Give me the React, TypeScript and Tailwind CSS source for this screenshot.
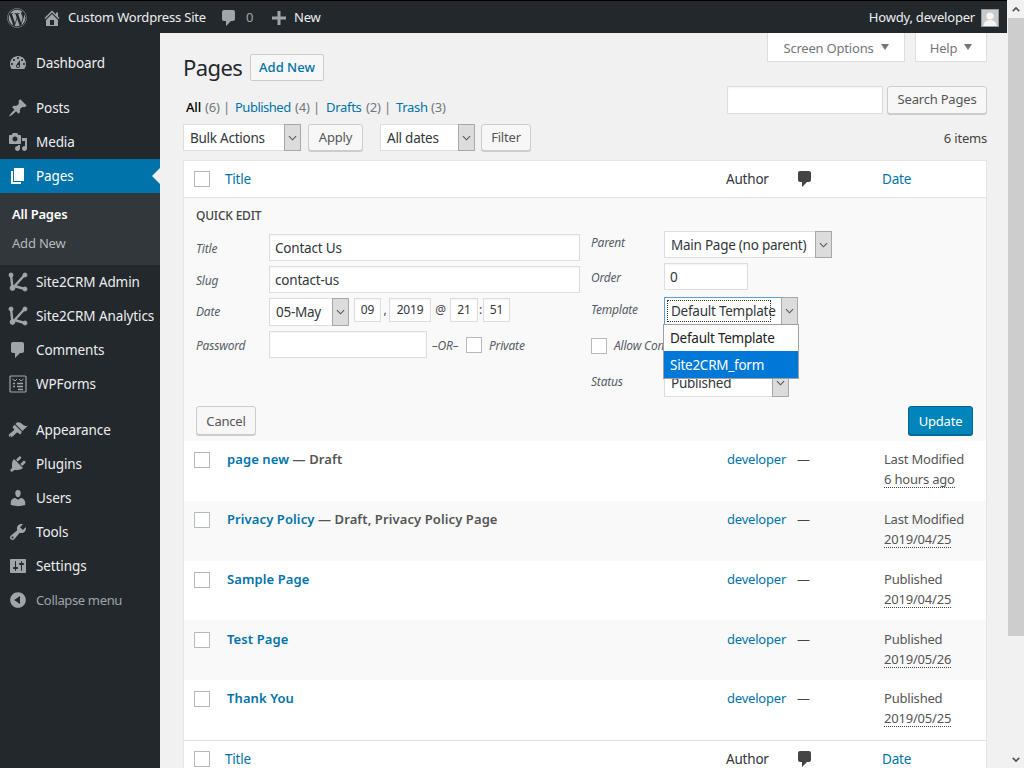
import React from "react";
import { FaWordpress } from "react-icons/fa";

const D = {
  dashboard: "M3.76 16h12.48c1.1-1.37 1.76-3.11 1.76-5 0-4.42-3.58-8-8-8s-8 3.58-8 8c0 1.89.66 3.63 1.76 5zM10 4c.55 0 1 .45 1 1s-.45 1-1 1-1-.45-1-1 .45-1 1-1zM6 6c.55 0 1 .45 1 1s-.45 1-1 1-1-.45-1-1 .45-1 1-1zm8 0c.55 0 1 .45 1 1s-.45 1-1 1-1-.45-1-1 .45-1 1-1zm-5.37 5.55L12 7v6c0 1.1-.9 2-2 2s-2-.9-2-2c0-.57.24-1.08.63-1.45zM4 10c.55 0 1 .45 1 1s-.45 1-1 1-1-.45-1-1 .45-1 1-1zm12 0c.55 0 1 .45 1 1s-.45 1-1 1-1-.45-1-1 .45-1 1-1zm-5 3c0-.55-.45-1-1-1s-1 .45-1 1 .45 1 1 1 1-.45 1-1z",
  post: "M10.44 3.02l1.82-1.82 6.36 6.35-1.83 1.82c-1.05-.68-2.48-.57-3.41.36l-.75.75c-.92.93-1.04 2.35-.35 3.41l-1.83 1.82-2.41-2.41-2.8 2.79c-.42.42-3.38 2.71-3.8 2.29s1.86-3.39 2.28-3.81l2.79-2.79L4.1 9.36l1.83-1.82c1.05.69 2.48.57 3.4-.36l.75-.75c.93-.92 1.05-2.35.36-3.41z",
  media: "M13 11V4c0-.55-.45-1-1-1h-1.67L9 1H5L3.67 3H2c-.55 0-1 .45-1 1v7c0 .55.45 1 1 1h10c.55 0 1-.45 1-1zM7 4.5c1.38 0 2.5 1.12 2.5 2.5S8.38 9.5 7 9.5 4.5 8.38 4.5 7 5.62 4.5 7 4.5zM14 6h5v10.5c0 1.38-1.12 2.5-2.5 2.5S14 17.88 14 16.5s1.12-2.5 2.5-2.5c.17 0 .34.02.5.05V9h-3V6zm-4 8.05V13h2v3.5c0 1.38-1.12 2.5-2.5 2.5S7 17.88 7 16.5 8.12 14 9.5 14c.17 0 .34.02.5.05z",
  page: "M6 15V2h10v13H6zm-1 1h8v2H3V5h2v11z",
  comment: "M5 2h9c1.1 0 2 .9 2 2v7c0 1.1-.9 2-2 2h-2l-5 5v-5H5c-1.1 0-2-.9-2-2V4c0-1.1.9-2 2-2z",
  appearance: "M14.48 11.06L7.41 3.99l1.5-1.5c.5-.56 2.3-.47 3.51.32 1.21.8 1.43 1.28 2.91 2.1 1.18.64 2.45 1.26 4.45.85zm-.71.71L6.7 4.7 4.93 6.47c-.39.39-.39 1.02 0 1.41l1.06 1.06c.39.39.39 1.03 0 1.42-.6.6-1.43 1.11-2.21 1.69-.35.26-.7.53-1.01.84C1.43 13.23.4 15 1 16.5c.2.5 1.5-.6 2.2-1 .2.5-.9 1.6-.5 2 .3.3 1.6-1 2.4-1.4.9-.5 1.7-1.6 2.4-2.3.6-.6 1.2-1.3 1.9-1.3.4 0 .7.2 1 .5l1.06 1.06c.39.39 1.02.39 1.41 0z",
  plugin: "M13.11 4.36L9.87 7.6 8 5.73l3.24-3.24c.35-.34 1.05-.2 1.56.32.52.51.66 1.21.31 1.55zm-8 1.77l.91-1.12 9.01 9.01-1.19.84c-.71.71-2.63 1.16-3.82 1.16H6.14L4.9 17.26c-.59.59-1.54.59-2.12 0-.59-.58-.59-1.53 0-2.12l1.24-1.24v-3.88c0-1.13.4-3.19 1.09-3.89zm7.26 3.97l3.24-3.24c.34-.35 1.04-.21 1.55.31.52.51.66 1.21.31 1.55l-3.24 3.25z",
  users: "M10 9.25c-2.27 0-2.73-3.44-2.73-3.44C7 4.02 7.82 2 9.97 2c2.16 0 2.98 2.02 2.71 3.81 0 0-.41 3.44-2.68 3.44zm0 2.57L12.72 10c2.39 0 4.52 2.33 4.52 4.53v2.49s-3.65 1.13-7.24 1.13c-3.65 0-7.24-1.13-7.24-1.13v-2.49c0-2.25 1.94-4.48 4.47-4.48z",
  tools: "M16.68 9.77c-1.34 1.34-3.3 1.67-4.95.99l-5.41 6.52c-.99.99-2.59.99-3.58 0s-.99-2.59 0-3.57l6.52-5.42c-.68-1.65-.35-3.61.99-4.95 1.28-1.28 3.12-1.62 4.72-1.06l-2.89 2.89 2.82 2.82 2.86-2.87c.53 1.58.18 3.39-1.08 4.65zM3.81 16.21c.4.39 1.04.39 1.43 0 .4-.4.4-1.04 0-1.43-.39-.4-1.03-.4-1.43 0-.39.39-.39 1.03 0 1.43z",
  settings: "M18 16V4c0-.55-.45-1-1-1H3c-.55 0-1 .45-1 1v12c0 .55.45 1 1 1h14c.55 0 1-.45 1-1zM8 11h1c.55 0 1 .45 1 1s-.45 1-1 1H8v1.5c0 .28-.22.5-.5.5s-.5-.22-.5-.5V13H6c-.55 0-1-.45-1-1s.45-1 1-1h1V5.5c0-.28.22-.5.5-.5s.5.22.5.5V11zm5-2h-1c-.55 0-1-.45-1-1s.45-1 1-1h1V5.5c0-.28.22-.5.5-.5s.5.22.5.5V7h1c.55 0 1 .45 1 1s-.45 1-1 1h-1v5.5c0 .28-.22.5-.5.5s-.5-.22-.5-.5V9z",
  collapse: "M10 2.16c4.33 0 7.84 3.51 7.84 7.84s-3.51 7.84-7.84 7.84S2.16 14.33 2.16 10 5.71 2.16 10 2.16zm2 11.72V6.12L6.18 9.97z",
  home: "M16 8.5l1.53 1.53-1.06 1.06L10 4.62l-6.47 6.47-1.06-1.06L10 2.5l4 4v-2h2v4zm-6-2.46l6 5.99V18H4v-5.97zM12 17v-5H8v5h4z",
  plus: "M17 8.500v3h-5.500v5.500h-3v-5.500H3v-3h5.500V3h3v5.500z",
};

function Dash({ d, className }: { d: string; className?: string }) {
  return (
    <svg viewBox="0 0 20 20" className={className} fill="currentColor">
      <path d={d} />
    </svg>
  );
}

function CrmIcon() {
  return (
    <svg viewBox="0 0 20 20" className="w-5 h-5" fill="currentColor" stroke="currentColor">
      <path d="M3 2.5 L4.5 16.5 M4.5 16.5 L17 2.5 M6 14 L17 17" strokeWidth="2.4" fill="none" />
      <circle cx="3" cy="3" r="2" />
      <circle cx="4.500" cy="16" r="2.400" />
      <circle cx="17" cy="3" r="2" />
      <circle cx="17" cy="17" r="2" />
    </svg>
  );
}

function FormsIcon() {
  return (
    <svg viewBox="0 0 20 20" className="w-5 h-5" fill="none" stroke="currentColor">
      <rect x="2" y="2" width="16" height="16" rx="1" strokeWidth="1.2" />
      <path d="M4.5 5 L7 7 L9 5 M11 5 L13 7 L15.5 5" strokeWidth="1" />
      <path d="M5 9.5h2M9 9.5h6M5 12.5h2M9 12.5h6M10 15.5h5" strokeWidth="1.6" />
    </svg>
  );
}

function MenuItem({ icon, label, active, dim }: { icon: React.ReactNode; label: string; active?: boolean; dim?: boolean }) {
  return (
    <div className={`relative flex items-center h-[34px] ${active ? "bg-[#0073aa] text-white" : dim ? "text-[#a0a5aa]" : "text-[#eeeeee]"}`}>
      <div className={`w-[36px] flex justify-center ${active ? "text-white" : "text-[#a0a5aa]"}`}>{icon}</div>
      <span className={`whitespace-nowrap ${dim ? "text-[13px] tracking-[-0.35px] pt-[2px]" : "text-[13.5px] tracking-[-0.1px]"}`}>{label}</span>
      {active && <div className="absolute right-0 top-[9px] border-y-[8px] border-r-[8px] border-y-transparent border-r-[#f1f1f1]" />}
    </div>
  );
}

function Chevron() {
  return (
    <svg viewBox="0 0 10 6" className="w-[9px] h-[6px]" fill="none" stroke="#555" strokeWidth="1.2">
      <path d="M1 1 L5 5 L9 1" />
    </svg>
  );
}

function Select({ label, width, h = "h-[27px]", focus }: { label: string; width: string; h?: string; focus?: boolean }) {
  return (
    <div className={`flex shrink-0 bg-white border ${focus ? "border-[#5b9dd9]" : "border-[#dddddd]"} ${width} ${h}`}>
      <div className={`flex-1 min-w-0 flex items-center px-[6px] text-[#32373c] whitespace-nowrap overflow-hidden text-[13.5px] tracking-[-0.25px] ${focus ? "" : "pt-[1px]"}`}>
        {focus ? <span className="border border-dotted border-[#333] -ml-[4px] pl-[3px] pr-[1px] leading-[20px] w-full">{label}</span> : label}
      </div>
      <div className="w-[17px] shrink-0 bg-[#dcdcdc] border border-[#a8a8a8] flex items-center justify-center -my-[1px] -mr-[1px]">
        <Chevron />
      </div>
    </div>
  );
}

function Btn({ children, className = "" }: { children: React.ReactNode; className?: string }) {
  return (
    <div className={`flex items-center justify-center shrink-0 bg-[#f7f7f7] border border-[#cccccc] rounded-[3px] shadow-[0_1px_0_#cccccc] text-[#555555] text-[13px] ${className}`}>
      {children}
    </div>
  );
}

function Box({ value, className = "" }: { value?: string; className?: string }) {
  return (
    <div className={`flex items-center shrink-0 bg-white border border-[#dddddd] shadow-[inset_0_1px_2px_rgba(0,0,0,0.05)] text-[#32373c] whitespace-nowrap ${className}`}>
      {value}
    </div>
  );
}

function Check({ className = "" }: { className?: string }) {
  return <div className={`w-4 h-4 shrink-0 bg-white border border-[#b4b9be] ${className}`} />;
}

function Label({ children, className = "" }: { children: React.ReactNode; className?: string }) {
  return <span className={`italic text-[12px] text-[#555d66] pt-[2px] ${className}`}>{children}</span>;
}

function Head({ top }: { top?: boolean }) {
  return (
    <div className={`flex items-center h-[36px] text-[13.5px] ${top ? "border-b" : "border-t"} border-[#e1e1e1] box-content`}>
      <div className="w-[41px] pl-[10px]"><Check /></div>
      <div className="w-[501px] text-[#0073aa]">Title</div>
      <div className="w-[72px] text-[#32373c]">Author</div>
      <div className="w-[84px] text-[#444444]"><Dash d={D.comment} className="w-5 h-5 -ml-[3px]" /></div>
      <div className="text-[#0073aa]">Date</div>
    </div>
  );
}

const filters = [
  { name: "All", count: "(6)", nameW: "w-[19px]", gap: "ml-[3px]", cls: "text-black font-medium" },
  { name: "Published", count: "(4)", nameW: "w-[60px]", gap: "ml-[4px]", cls: "text-[#0073aa] tracking-[-0.5px]" },
  { name: "Drafts", count: "(2)", nameW: "w-[40px]", gap: "ml-[5px]", cls: "text-[#0073aa] tracking-[-0.3px]" },
  { name: "Trash", count: "(3)", nameW: "w-[35px]", gap: "ml-[4px]", cls: "text-[#0073aa] tracking-[-0.3px]" },
];

const rows = [
  { title: "page new", state: " — Draft", d1: "Last Modified", d2: "6 hours ago", h: "h-[60px]", pt: "pt-[8px]", bg: "bg-white" },
  { title: "Privacy Policy", state: " — Draft, Privacy Policy Page", d1: "Last Modified", d2: "2019/04/25", h: "h-[60px]", pt: "pt-[8px]", bg: "bg-[#f9f9f9]" },
  { title: "Sample Page", state: "", d1: "Published", d2: "2019/04/25", h: "h-[59px]", pt: "pt-[8px]", bg: "bg-white" },
  { title: "Test Page", state: "", d1: "Published", d2: "2019/05/26", h: "h-[60px]", pt: "pt-[9px]", bg: "bg-[#f9f9f9]" },
  { title: "Thank You", state: "", d1: "Published", d2: "2019/05/25", h: "h-[60px]", pt: "pt-[8px]", bg: "bg-white" },
];

export default function App() {
  return (
    <div className="flex h-[768px] w-[1024px] overflow-hidden bg-[#f1f1f1] text-[13px] tracking-[-0.2px] text-[#444444] font-['Noto_Sans','Open_Sans',sans-serif]">
      <div className="flex flex-col w-[1007px] shrink-0">
        {/* Admin bar */}
        <div className="flex items-center h-[33px] shrink-0 bg-[#23282d] border-t border-black text-[#eeeeee] text-[13px] pt-[2px]">
          <FaWordpress className="w-[20px] h-[20px] ml-[7px] text-[#a0a5aa]" />
          <Dash d={D.home} className="w-5 h-5 ml-[15px] text-[#a0a5aa]" />
          <span className="ml-[6px] w-[137px] whitespace-nowrap">Custom Wordpress Site</span>
          <Dash d={D.comment} className="w-5 h-5 ml-[14px] text-[#a0a5aa]" />
          <span className="ml-[7px] w-[8px] text-[#a0a5aa]">0</span>
          <Dash d={D.plus} className="w-5 h-5 ml-[15px] text-[#a0a5aa]" />
          <span className="ml-[5px]">New</span>
          <span className="ml-auto">Howdy, developer</span>
          <div className="relative w-[18px] h-[18px] ml-[6px] mr-[8px] bg-[#c9c9c9] border border-[#999] overflow-hidden">
            <svg viewBox="0 0 16 16" className="w-full h-full" fill="#f5f5f5">
              <circle cx="8" cy="6" r="3.600" />
              <path d="M1.5 16c0-4 3-6 6.500-6s6.500 2 6.500 6z" />
            </svg>
          </div>
        </div>
        <div className="flex flex-1 min-h-0">
          {/* Sidebar */}
          <div className="w-[160px] shrink-0 bg-[#23282d] pt-[13px]">
            <MenuItem icon={<Dash d={D.dashboard} className="w-5 h-5" />} label="Dashboard" />
            <div className="h-[11px]" />
            <MenuItem icon={<Dash d={D.post} className="w-5 h-5" />} label="Posts" />
            <MenuItem icon={<Dash d={D.media} className="w-5 h-5" />} label="Media" />
            <MenuItem active icon={<Dash d={D.page} className="w-5 h-5" />} label="Pages" />
            <div className="bg-[#32373c] h-[72px] pl-3 pt-[7px] text-[13px]">
              <div className="h-[29px] flex items-center font-semibold text-white">All Pages</div>
              <div className="h-[29px] flex items-center text-[#b4b9be]">Add New</div>
            </div>
            <MenuItem icon={<CrmIcon />} label="Site2CRM Admin" />
            <MenuItem icon={<CrmIcon />} label="Site2CRM Analytics" />
            <MenuItem icon={<Dash d={D.comment} className="w-5 h-5" />} label="Comments" />
            <MenuItem icon={<FormsIcon />} label="WPForms" />
            <div className="h-[12px]" />
            <MenuItem icon={<Dash d={D.appearance} className="w-5 h-5" />} label="Appearance" />
            <MenuItem icon={<Dash d={D.plugin} className="w-5 h-5" />} label="Plugins" />
            <MenuItem icon={<Dash d={D.users} className="w-5 h-5" />} label="Users" />
            <MenuItem icon={<Dash d={D.tools} className="w-5 h-5" />} label="Tools" />
            <MenuItem icon={<Dash d={D.settings} className="w-5 h-5" />} label="Settings" />
            <MenuItem dim icon={<Dash d={D.collapse} className="w-5 h-5" />} label="Collapse menu" />
          </div>
          {/* Main */}
          <div className="flex-1 min-w-0 pl-[23px] pr-[20px]">
            <div className="flex justify-end gap-[10px] h-[21px]">
              <div className="flex items-center justify-center gap-[7px] w-[138px] h-[29px] pt-[3px] bg-white border border-t-0 border-[#dddddd] text-[#72777c]">
                Screen Options <span className="border-x-[4.5px] border-t-[6px] border-x-transparent border-t-[#72777c] -mt-[3px]" />
              </div>
              <div className="flex items-center justify-center gap-[7px] w-[72px] h-[29px] pt-[3px] bg-white border border-t-0 border-[#dddddd] text-[#72777c]">
                Help <span className="border-x-[4.5px] border-t-[6px] border-x-transparent border-t-[#72777c] -mt-[3px]" />
              </div>
            </div>
            <div className="flex items-center h-[27px]">
              <span className="w-[58px] whitespace-nowrap text-[22px] tracking-[-0.6px] leading-none text-[#23282d] -mt-[2px]">Pages</span>
              <div className="flex items-center justify-center w-[74px] h-[27px] pt-[1px] ml-[9px] bg-[#f7f7f7] border border-[#cccccc] rounded-[2px] text-[#0073aa] font-medium tracking-normal">Add New</div>
            </div>
            <div className="flex justify-between h-[28px] mt-[5px]">
              <div className="flex pl-[3px] pt-[11px] text-[13px] leading-[20px] text-[#72777c] whitespace-nowrap">
                {filters.map((f, i) => (
                  <React.Fragment key={f.name}>
                    <span className={`${i === 0 ? "" : f.gap} ${f.nameW} ${f.cls}`}>{f.name}</span>
                    <span className="w-[17px]">{f.count}</span>
                    {i < 3 && <span className="w-[9px] text-center">|</span>}
                  </React.Fragment>
                ))}
              </div>
              <div className="flex gap-[4px]">
                <Box className="w-[156px] h-[28px]" />
                <Btn className="w-[100px] h-[28px]">Search Pages</Btn>
              </div>
            </div>
            <div className="flex items-start h-[28px] mt-[10px]">
              <Select label="Bulk Actions" width="w-[118px]" />
              <Btn className="w-[55px] h-[27px] ml-[7px]">Apply</Btn>
              <Select label="All dates" width="w-[95px]" h="h-[27px] ml-[17px]" />
              <Btn className="w-[50px] h-[27px] ml-[6px]">Filter</Btn>
              <span className="ml-auto pt-[5px]">6 items</span>
            </div>
            {/* Table */}
            <div className="mt-[8px] bg-white border border-[#e5e5e5]">
              <Head top />
              <div className="flex flex-col h-[243px] bg-[#f9f9f9] pl-[12px] pr-[13px] pb-[6px]">
                <div className="flex">
                  <div className="w-[384px] shrink-0">
                    <div className="h-[36px] flex items-center text-[12px] font-medium text-[#444] uppercase">Quick Edit</div>
                    <div className="flex items-center h-[27px]">
                      <Label className="w-[73px]">Title</Label>
                      <Box value="Contact Us" className="w-[311px] h-[27px] px-[5px] pt-[1px] text-[13.5px]" />
                    </div>
                    <div className="flex items-center h-[27px] mt-[5px]">
                      <Label className="w-[73px]">Slug</Label>
                      <Box value="contact-us" className="w-[311px] h-[27px] px-[5px] pt-[1px] text-[13.5px]" />
                    </div>
                    <div className="flex items-start h-[28px] mt-[5px]">
                      <Label className="w-[73px] pt-[5px]">Date</Label>
                      <Select label="05-May" width="w-[80px]" h="h-[28px]" />
                      <Box value="09" className="w-[27px] h-[24px] ml-[5px] justify-center text-[12px]" />
                      <span className="w-[8px] text-center text-[12px] pt-[3px]">,</span>
                      <Box value="2019" className="w-[42px] h-[24px] justify-center text-[12px]" />
                      <span className="w-[19px] text-center text-[12px] pt-[3px]">@</span>
                      <Box value="21" className="w-[28px] h-[24px] justify-center text-[12px]" />
                      <span className="w-[5px] text-center text-[12px] pt-[3px]">:</span>
                      <Box value="51" className="w-[27px] h-[24px] justify-center text-[12px]" />
                    </div>
                    <div className="flex items-center h-[27px] mt-[5px]">
                      <Label className="w-[73px]">Password</Label>
                      <Box className="w-[158px] h-[27px]" />
                      <Label className="ml-[5px] w-[29px] whitespace-nowrap">–OR–</Label>
                      <Check className="ml-[5px]" />
                      <Label className="ml-[7px]">Private</Label>
                    </div>
                  </div>
                  <div className="ml-[11px] pt-[33px]">
                    <div className="flex items-center h-[27px]">
                      <Label className="w-[73px] -mt-[5px]">Parent</Label>
                      <Select label="Main Page (no parent)" width="w-[168px]" />
                    </div>
                    <div className="flex items-center h-[27px] mt-[5px]">
                      <Label className="w-[73px]">Order</Label>
                      <Box value="0" className="w-[84px] h-[27px] px-[5px] pt-[1px] text-[13.5px]" />
                    </div>
                    <div className="relative flex items-center h-[28px] mt-[7px]">
                      <Label className="w-[73px] -mt-[5px]">Template</Label>
                      <Select focus label="Default Template" width="w-[134px]" h="h-[28px]" />
                      <div className="absolute z-10 left-[72px] top-[27px] w-[136px] h-[55px] bg-white border border-[#a0a0a0] text-[13.5px] tracking-[-0.25px] text-[#222]">
                        <div className="h-[26px] flex items-center pt-[1px] px-[6px]">Default Template</div>
                        <div className="h-[27px] flex items-center pt-[1px] px-[6px] bg-[#0078d7] text-white">Site2CRM_form</div>
                      </div>
                    </div>
                    <div className="flex items-center h-[16px] mt-[13px]">
                      <Check />
                      <Label className="ml-[7px] -mt-[2px]">Allow Comments</Label>
                    </div>
                    <div className="flex items-center h-[28px] mt-[15px]">
                      <Label className="w-[73px] -mt-[5px]">Status</Label>
                      <Select label="Published" width="w-[125px]" h="h-[28px]" />
                    </div>
                  </div>
                </div>
                <div className="flex justify-between mt-auto">
                  <Btn className="w-[60px] h-[29px] pt-[2px]">Cancel</Btn>
                  <div className="flex items-center justify-center w-[65px] h-[29px] pt-[2px] bg-[#0085ba] border border-[#006799] rounded-[3px] shadow-[0_1px_0_#006799] text-white text-[13px]">Update</div>
                </div>
              </div>
              {rows.map((r) => (
                <div key={r.title} className={`flex ${r.h} ${r.pt} ${r.bg} text-[13px] leading-[20px]`}>
                  <div className="w-[43px] pl-[10px] pt-[3px]"><Check /></div>
                  <div className="w-[500px] whitespace-nowrap font-semibold tracking-[0.1px] text-[#555555]">
                    <span className="text-[#0073aa]">{r.title}</span>{r.state}
                  </div>
                  <div className="w-[70px] text-[#0073aa]">developer</div>
                  <div className="w-[87px] text-[#444444]">—</div>
                  <div className="text-[#555555]">
                    <div>{r.d1}</div>
                    <div className="inline-block leading-[16px] mt-[2px] border-b border-dotted border-[#444444]">{r.d2}</div>
                  </div>
                </div>
              ))}
              <Head />
            </div>
          </div>
        </div>
      </div>
      {/* Scrollbar */}
      <div className="flex flex-col w-[17px] shrink-0 bg-[#f1f1f1] pl-[1px]">
        <div className="h-[18px] flex items-center justify-center">
          <svg viewBox="0 0 10 6" className="w-[8px] h-[5px]" fill="none" stroke="#505050" strokeWidth="2"><path d="M1 5 L5 1 L9 5" /></svg>
        </div>
        <div className="h-[618px] bg-[#cdcdcd]" />
        <div className="flex-1" />
        <div className="h-[18px] flex items-center justify-center">
          <svg viewBox="0 0 10 6" className="w-[8px] h-[5px]" fill="none" stroke="#505050" strokeWidth="2"><path d="M1 1 L5 5 L9 1" /></svg>
        </div>
      </div>
    </div>
  );
}
